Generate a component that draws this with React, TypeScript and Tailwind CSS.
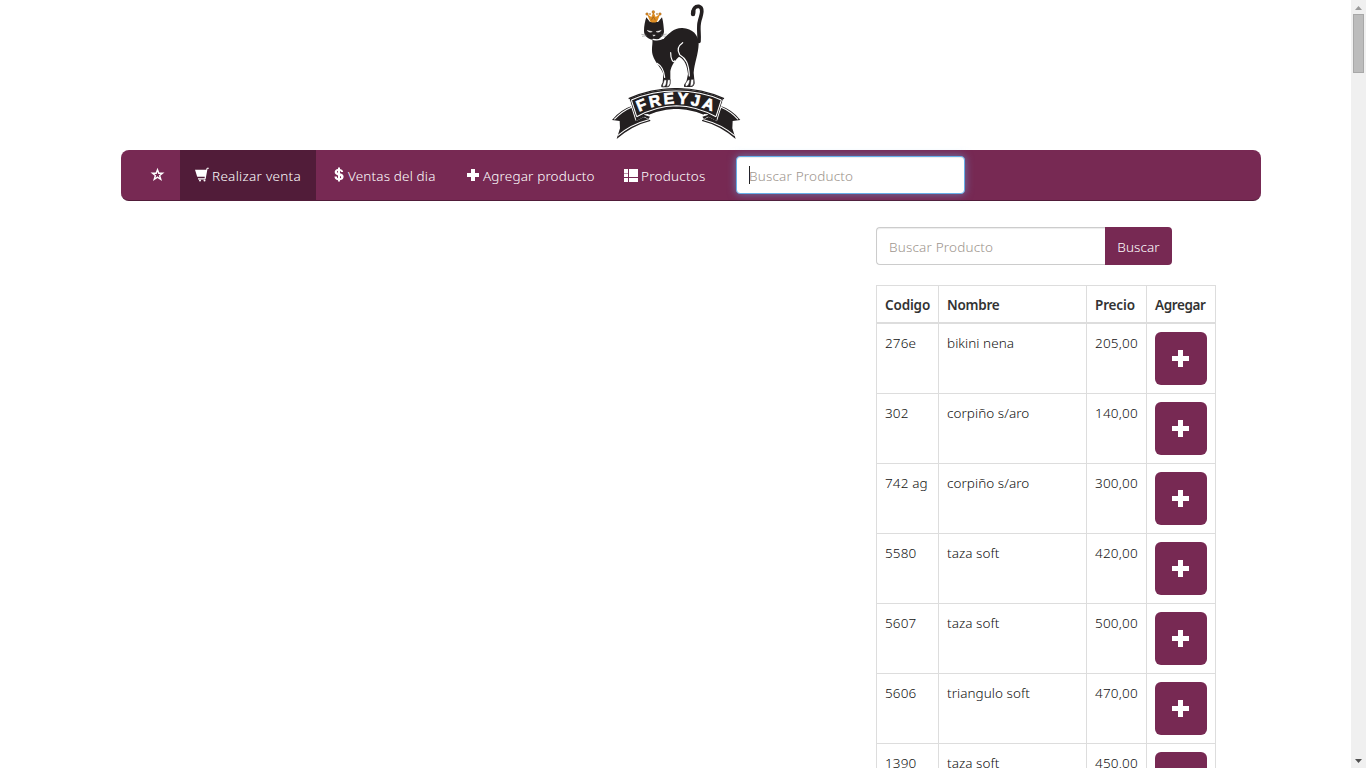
import type { ReactNode } from "react";

const rows = [
  ["276e", "bikini nena", "205,00"],
  ["302", "corpiño s/aro", "140,00"],
  ["742 ag", "corpiño s/aro", "300,00"],
  ["5580", "taza soft", "420,00"],
  ["5607", "taza soft", "500,00"],
  ["5606", "triangulo soft", "470,00"],
  ["1390", "taza soft", "450,00"],
];

const columnTracking = ["tracking-[0.15px]", "tracking-[0.05px]", "tracking-[0.2px]"];

const headings = [
  { text: "Codigo", tracking: "tracking-[-0.15px]" },
  { text: "Nombre", tracking: "tracking-[-0.25px]" },
  { text: "Precio", tracking: "tracking-[-0.15px]" },
  { text: "Agregar", tracking: "tracking-[-0.4px]" },
];

function Logo() {
  return (
    <svg className="block h-[150px] w-[150px]" viewBox="0 0 450 450">
      <path d="M280 42 C278 25 287 18 296 19 C311 23 305 42 299 62 C293 82 299 100 297 124" fill="none" stroke="#231f20" strokeWidth="11" strokeLinecap="round" />
      <path d="M280 34 L279 42" stroke="#231f20" strokeWidth="13" strokeLinecap="round" />
      <path d="M139 52 L150 66 L174 66 L186 52 C190 66 191 80 192 94 C192 105 184 113 176 116 L190 117 C207 101 222 83 247 84 C278 86 296 105 296 132 C295 163 283 190 281 218 L284 250 Q282 261 272 261 L253 261 Q249 255 259 246 L264 222 C261 198 256 180 237 170 C226 179 214 196 211 214 L211 250 Q211 261 202 262 L185 262 Q181 257 188 248 L190 221 C183 202 166 190 158 165 C153 145 159 132 157 119 C141 115 132 106 132 92 C132 79 135 63 139 52Z" fill="#231f20" />
      <path d="M151 65 L141 42 L154 51 L160 35 L167 51 L181 41 L171 65 Q161 70 151 65Z" fill="#de8d22" />
      <g fill="#de8d22" stroke="#73461d" strokeWidth="0.8">
        <circle cx="141" cy="42" r="4" /><circle cx="160" cy="36" r="4.2" /><circle cx="180" cy="42" r="4" /><circle cx="150" cy="42" r="2" /><circle cx="171" cy="42" r="2" />
      </g>
      <path d="M154 61 L160 50 L166 61" fill="none" stroke="#73461d" strokeWidth="1.5" />
      <g fill="none" stroke="#fff" strokeWidth="3.6" strokeLinecap="round">
        <path d="M248 128 C232 139 231 151 239 164 C258 175 266 190 268 228" />
        <path d="M212 158 C212 177 219 189 224 183" />
        <path d="M171 190 C184 197 191 207 194 232" />
        <path d="M159 118 Q176 122 190 115" />
      </g>
      <path d="M141 91 L157 95 Q148 100 141 91 M168 95 L184 91 Q178 100 168 95 M158 105 L166 105 L162 109Z" fill="#f6f4f3" stroke="#f6f4f3" strokeWidth="1" />
      <path d="M124 103 L139 105 M126 109 L140 107 M183 105 L200 102 M184 107 L198 109" stroke="#777" strokeWidth="1.5" />
      <path d="M193 239 L188 254 Q186 260 191 260 Q198 260 199 250 L200 240Z M203 239 L200 260 Q208 261 210 251 L211 239Z M264 239 L256 251 Q254 260 260 259 Q267 257 268 248 L270 240Z M273 238 L270 259 Q280 260 281 250 L281 238Z" fill="#fff" stroke="#231f20" strokeWidth="1.8" />
      <path d="M36 360 Q61 329 101 316 L112 342 L151 361 L151 363 Q98 376 50 417 L60 385 L59 363Z M421 360 Q397 329 357 316 L345 342 L306 361 L306 363 Q359 376 407 417 L397 385 L398 363Z" fill="#231f20" />
      <path d="M43 358 Q66 333 98 320 M53 407 Q92 373 146 359 M414 358 Q392 333 360 320 M404 407 Q365 373 311 359" fill="none" stroke="#fff" strokeWidth="3.2" />
      <path d="M87 295 Q156 265 229 266 Q302 265 371 295 L350 362 Q290 326 229 325 Q168 326 108 362Z" fill="#231f20" stroke="#fff" strokeWidth="3" />
      <path d="M86 296 Q156 265 229 266 Q302 265 372 296 M108 361 Q168 325 229 324 Q290 325 350 361" fill="none" stroke="#231f20" strokeWidth="4" />
      <path d="M94 300 Q156 273 229 273 Q302 273 364 300 M110 350 Q168 318 229 317 Q290 318 348 350 M94 300 L110 350 M364 300 L348 350" fill="none" stroke="#fff" strokeWidth="3.2" />
      <path d="M132 343 L146 342 L145 356Z M325 343 L311 342 L312 356Z" fill="#fff" />
      <path d="M131 344 L131 349 L145 357 L150 350Z M326 344 L326 349 L312 357 L307 350Z" fill="#231f20" />
      <defs><path id="ribbon-line" d="M117 336 Q171 311 229 311 Q287 311 344 337" /></defs>
      <text fill="#fff" stroke="#fff" strokeWidth="2.2" className="text-[47px] font-bold" fontFamily="Liberation Sans, sans-serif" textLength="226" lengthAdjust="spacing"><textPath href="#ribbon-line">FREYJA</textPath></text>
      <path d="M184 268 Q226 263 268 269 Q226 266 184 268" fill="#231f20" />
    </svg>
  );
}

function Glyph({ children }: { children: ReactNode }) {
  return <svg className="block h-[14px] w-[14px] shrink-0 overflow-visible" viewBox="0 0 14 14" fill="currentColor">{children}</svg>;
}

function NavText({ children, className = "tracking-[0.15px]" }: { children: ReactNode; className?: string }) {
  return <span className={`whitespace-nowrap pt-[2px] ${className}`}>{children}</span>;
}

export default function App() {
  return (
    <div className="flex h-[768px] w-[1366px] overflow-hidden bg-white font-['Noto_Sans','Open_Sans',sans-serif] text-[13.5px] font-light leading-5 text-[#333]">
      <main className="w-[1351px] shrink-0">
        <div className="h-[150px] pl-[600px]"><Logo /></div>
        <nav className="ml-[121px] flex h-[51px] w-[1140px] rounded-lg border-b border-[#511c39] bg-[#772953] text-white">
          <a className="ml-[14px] flex w-[45px] items-center pl-[15px]">
            <Glyph><path fillRule="evenodd" d="M7.5 -.3 9.3 4.6H14.5L10.4 7.8 12 13 7.5 9.9 3 13 4.6 7.8.5 4.6H5.7zM7.5 3.7 6.7 6.1H4.5L6.2 7.4 5.5 9.7 7.5 8.3 9.5 9.7 8.8 7.4 10.5 6.1H8.3z" /></Glyph>
          </a>
          <a className="flex w-[136px] items-center gap-[3px] bg-[#511c39] pl-[15px]">
            <Glyph><path d="M0 1.7h11.2L11.6.2Q11.7-.3 12.2-.3H13.8V.7H12.5L10.7 10.8Q10.6 11.4 10 11.4H3V10.3H9.6L9.8 8.8H2.2Z" /><circle cx="5" cy="12.4" r="1" /><circle cx="9.5" cy="12.4" r="1" /></Glyph>
            <NavText className="tracking-[0.28px]">Realizar venta</NavText>
          </a>
          <a className="flex w-[135px] items-center gap-[3px] pl-[15px]">
            <Glyph><path transform="translate(1 -.5)" d="M6 0h2v1.4c2 .3 3 1.5 3.2 3.2H9C8.8 3.9 8.6 3.5 8 3.3v2.5c2.4.7 3.6 1.6 3.6 3.5 0 2-1.3 3.2-3.6 3.4V14H6v-1.3c-2.3-.3-3.4-1.6-3.5-3.7h2.3c.1 1 .5 1.6 1.2 1.8V7.9C3.7 7.3 2.7 6.4 2.7 4.6c0-1.8 1.2-3 3.3-3.2zM6 3.2c-1.4.3-1.3 1.8 0 2.1zM8 8.4v2.4c1.5-.3 1.6-1.9 0-2.4z" /></Glyph>
            <NavText>Ventas del dia</NavText>
          </a>
          <a className="flex w-[158px] items-center gap-[3px] pl-[15px]">
            <Glyph><path d="M5 1h4v4h4v4H9v4H5V9H1V5h4z" /></Glyph>
            <NavText>Agregar producto</NavText>
          </a>
          <a className="flex w-[112px] items-center gap-[3px] pl-[15px]">
            <Glyph><path d="M0 1h4v4H0zM0 5.4h4V9H0zM5 1h9v8H5zM0 10h4v4H0zM5 10h9v4H5z" /></Glyph>
            <NavText className="tracking-[0.25px]">Productos</NavText>
          </a>
          <div className="ml-[15px] mt-[6px] flex h-[38px] w-[229px] items-center rounded border border-[#66afe9] bg-white pl-3 tracking-[0.18px] text-[#9d958d] shadow-[inset_0_1px_1px_rgba(0,0,0,0.075),0_0_8px_rgba(102,175,233,0.6)]">
            <i className="-mr-px h-[18px] w-px bg-[#222]" /><span className="pt-[2px]">Buscar Producto</span>
          </div>
        </nav>
        <section className="ml-[876px] mt-[26px] w-[340px]">
          <div className="flex h-[38px]">
            <div className="flex w-[229px] items-center rounded-l border border-r-0 border-[#ccc] pl-3 pt-[2px] tracking-[0.18px] text-[#9d958d] shadow-[inset_0_1px_1px_rgba(0,0,0,0.075)]">Buscar Producto</div>
            <button className="flex w-[67px] items-center justify-center rounded-r bg-[#772953] pt-[2px] tracking-[0.1px] text-white">Buscar</button>
          </div>
          <table className="mt-5 w-[340px] table-fixed border-separate border-spacing-0 border-r border-[#ddd] text-left">
            <colgroup><col className="w-[62px]" /><col className="w-[148px]" /><col className="w-[60px]" /><col className="w-[69px]" /></colgroup>
            <thead>
              <tr className="h-[39px]">
                {headings.map((h) => (
                  <th key={h.text} className={`border-b-2 border-l border-t border-[#ddd] px-2 pb-0 pt-px font-semibold ${h.tracking}`}>{h.text}</th>
                ))}
              </tr>
            </thead>
            <tbody>
              {rows.map((r) => (
                <tr key={r[0]} className="h-[70px] text-[#111]">
                  {r.map((c, i) => (
                    <td key={i} className={`whitespace-nowrap border-b border-l border-[#ddd] px-2 py-0 pt-[9px] align-top ${columnTracking[i]}`}>{c}</td>
                  ))}
                  <td className="border-b border-l border-[#ddd] p-2 align-top">
                    <button className="flex h-[53px] w-[52px] items-center justify-center rounded-md bg-[#772953] pr-px text-white">
                      <svg className="block h-[17px] w-[17px]" viewBox="0 0 17 17" fill="currentColor"><path d="M6 0h5v6h6v5h-6v6H6v-6H0V6h6z" /></svg>
                    </button>
                  </td>
                </tr>
              ))}
            </tbody>
          </table>
        </section>
      </main>
      <aside className="flex w-[15px] shrink-0 flex-col items-center bg-[#f0f0f0]">
        <svg className="mt-[6px] h-1 w-[7px]" viewBox="0 0 7 4"><path d="M3.5 0 7 4H0z" fill="#999" /></svg>
        <div className="mt-1 h-[59px] w-[11px] border border-[#a8a8a8] bg-[#bcbcbc]" />
        <svg className="mb-[5px] mt-auto h-1 w-[7px]" viewBox="0 0 7 4"><path d="M3.5 4 0 0h7z" fill="#505050" /></svg>
      </aside>
    </div>
  );
}
